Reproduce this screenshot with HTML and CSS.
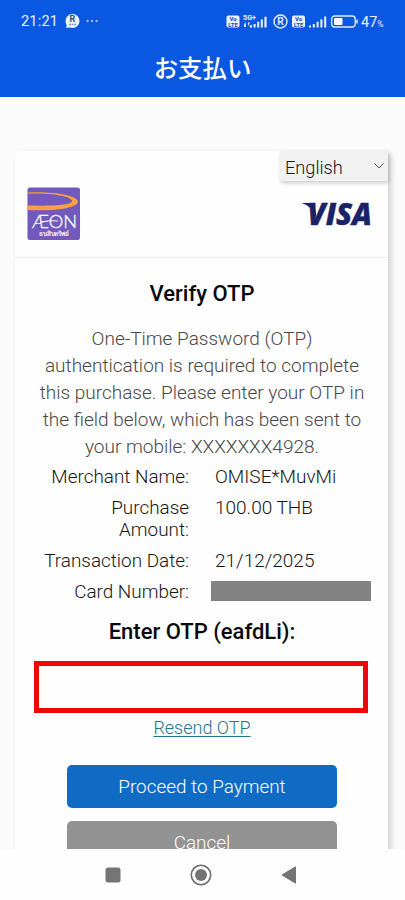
FILE: index.html
```html
<!DOCTYPE html>
<html lang="ja">
<head>
<meta charset="utf-8">
<meta name="viewport" content="width=device-width, initial-scale=1">
<title>お支払い</title>
<link rel="stylesheet" href="styles.css">
</head>
<body>
<div class="phone">
  <header class="appbar">
    <div class="status">
      <span class="clock">21:21</span>
      <svg class="notice" width="36" height="16" viewBox="0 0 36 16">
        <circle cx="7.5" cy="8" r="7" fill="#edf5ff"/>
        <text x="7.5" y="9" font-size="9" font-weight="700" text-anchor="middle" fill="#29527f">R</text>
        <path d="M4 11.500h7" stroke="#7d99ba" stroke-width="1.600" stroke-dasharray="2 .6"/>
        <path d="M1 15l1-4 4 3z" fill="#edf5ff"/>
        <circle cx="22.700" cy="8" r="1" fill="#dceaff"/><circle cx="27.100" cy="8" r="1" fill="#dceaff"/><circle cx="31.500" cy="8" r="1" fill="#dceaff"/>
      </svg>
      <svg class="signals" width="132" height="18" viewBox="0 0 132 18">
        <g fill="#e9f3ff">
          <rect x="0.500" y="3.500" width="13" height="12" rx="2"/>
          <rect x="66" y="3.500" width="13" height="12" rx="2"/>
          <text x="17" y="7.800" font-size="7" font-weight="700" textLength="13" lengthAdjust="spacingAndGlyphs">5G+</text>
          <path d="M18 12.500l1.800-2.500V15h-1.800zM22 10.500h1.800l-1.800 4z"/>
          <path d="M24 13h2v2.500h-2zM27.600 12h2v3.500h-2zM31.200 9.700h2v5.800h-2zM34.800 7.500h2v8h-2zM38.400 4.700h2.200v10.800h-2.200z"/>
          <path d="M83 13.500h2v2h-2zM86.800 12h2v3.500h-2zM90.600 9.800h2v5.700h-2zM94.400 7.300h2v8.200h-2zM98.200 4.500h2v11h-2z"/>
        </g>
        <g fill="#1755cb" font-size="6" font-weight="800" text-anchor="middle">
          <text x="7" y="9">Vo</text><text x="7" y="14.500">LTE</text>
          <text x="72.500" y="9">Vo</text><text x="72.500" y="14.500">LTE</text>
        </g>
        <circle cx="54.500" cy="9.500" r="6.500" fill="none" stroke="#e9f3ff" stroke-width="1.400"/>
        <text x="54.500" y="13.100" font-size="10" font-weight="600" fill="#e9f3ff" text-anchor="middle">R</text>
        <rect x="105.700" y="4" width="23.500" height="11" rx="3" fill="none" stroke="#e0edff" stroke-width="1.300"/>
        <rect x="108" y="6" width="8.500" height="7" rx="1" fill="#f3f9ff"/>
        <path d="M131 7.500v4" stroke="#e0edff" stroke-width="1.500"/>
      </svg>
      <span class="charge">47<small>%</small></span>
    </div>
    <h1>お支払い</h1>
  </header>

  <main class="viewport">
    <section class="card">
      <div class="brands">
        <svg class="aeon" width="54" height="54" viewBox="0 0 54 54">
          <rect x="0.500" y="0.500" width="52.500" height="52.500" rx="2.500" fill="#7259bd"/>
          <path d="M.5 5.500C25 4 50 8 51 14.500C51 20.500 30 24.500 .5 23V18.500C25 19 46 18.500 45 13.500C43 8.500 22 5.800 .5 6.500Z" fill="#f9a044"/>
          <text x="5" y="40.500" font-family="Lato, sans-serif" fill="#fff" stroke="#fff" stroke-width=".3" font-size="18" textLength="45" lengthAdjust="spacingAndGlyphs">ÆON</text>
          <path d="M13 36C18 33.500 24 33.500 31 34" fill="none" stroke="#fff"/>
          <text x="12" y="49" font-size="6.500" fill="#f7f0ff" stroke="#f7f0ff" stroke-width=".2" textLength="30" lengthAdjust="spacingAndGlyphs">ธนสินทรัพย์</text>
        </svg>
        <svg class="visa" width="70" height="26" viewBox="0 0 70 26">
          <path d="M-.5 2H8.500Q11.500 2 12.500 5L15 19Q11 5 -.5 2Z" fill="#1a2367"/>
          <text x="5.500" y="23.500" font-family="Open Sans, sans-serif" font-size="30" font-weight="800" font-style="italic" fill="#1a2367" stroke="#1a2367" stroke-width=".4" textLength="64.500" lengthAdjust="spacingAndGlyphs">VISA</text>
        </svg>
        <div class="language">English
          <svg width="12" height="8" viewBox="0 0 12 8"><path d="M1.500 1.500L6 6l4.500-4.500" fill="none" stroke="#555" stroke-width="1"/></svg>
        </div>
      </div>
      <h2>Verify OTP</h2>
      <p class="message">One-Time Password (OTP)<br>authentication is required to complete<br>this purchase. Please enter your OTP in<br>the field below, which has been sent to<br>your mobile: XXXXXXX4928.</p>
      <dl class="details">
        <dt>Merchant Name:</dt><dd>OMISE*MuvMi</dd>
        <dt>Purchase<br>Amount:</dt><dd>100.00 THB</dd>
        <dt>Transaction Date:</dt><dd>21/12/2025</dd>
        <dt>Card Number:</dt><dd class="redacted"></dd>
      </dl>
      <h2 class="enter">Enter OTP (eafdLi):</h2>
      <input class="otp" aria-label="OTP">
      <a class="resend" href="#">Resend OTP</a>
      <button class="button proceed">Proceed to Payment</button>
      <button class="button cancel">Cancel</button>
    </section>
  </main>

  <nav class="navbar">
    <svg width="16" height="16" viewBox="0 0 16 16"><rect x="0.500" y="0.500" width="15" height="15" rx="2.500" fill="#757575"/></svg>
    <svg width="22" height="22" viewBox="0 0 22 22"><circle cx="11" cy="11" r="9.700" fill="none" stroke="#6b6b6b" stroke-width="1.600"/><circle cx="11" cy="11" r="6" fill="#737373"/></svg>
    <svg width="16" height="18" viewBox="0 0 16 18"><path d="M1 9L14.500 .8V17.200Z" fill="#757575" stroke="#757575" stroke-linejoin="round"/></svg>
  </nav>
</div>
</body>
</html>
```
FILE: styles.css
```css
* { box-sizing: border-box; }
body { margin: 0; font-family: Roboto, "Noto Sans CJK JP", sans-serif; }
.phone { width: 405px; height: 900px; display: flex; flex-direction: column; overflow: hidden; background: #fefefe; }
.appbar { flex: 0 0 97px; background: #0a57e2; color: #fff; }
.status { height: 42px; padding: 12px 0 0 21px; display: flex; align-items: flex-start; color: #e9f3ff; }
.clock { width: 44px; font-size: 14.5px; line-height: 20px; letter-spacing: .2px; }
.notice { margin-top: 1px; }
.signals { margin-left: 125px; }
.charge { margin-left: 3px; font-size: 14.5px; line-height: 21px; white-space: nowrap; }
.charge small { font-size: 8.5px; }
h1 { margin: 7px 0 0; text-align: center; font: 500 24.4px/36px "Noto Sans CJK JP", sans-serif; }
.viewport { height: 752px; padding: 54px 17px 0 15px; overflow: hidden; background: #fbfbfb; }
.card { height: 850px; display: flex; flex-direction: column; align-items: center; background: #fefefe; border-radius: 7px 0 0; box-shadow: 3px 3px 6px rgba(0,0,0,.17); font-weight: 300; font-size: 19px; color: #151515; }
.brands { position: relative; width: 100%; height: 106.5px; flex: none; padding: 36px 16px 0 12px; display: flex; justify-content: space-between; border-bottom: 1.5px solid #ececec; }
.visa { margin-top: 14px; overflow: visible; }
.language { position: absolute; right: 0; top: 0; width: 108px; height: 30px; padding: 3px 3px 0 5px; display: flex; justify-content: space-between; align-items: center; background: #f1f1f1; box-shadow: 1px 2px 4px rgba(0,0,0,.2); font-size: 18.2px; line-height: 30px; font-weight: 300; }
.language svg { margin-bottom: 3px; }
h2 { margin: 21.5px 0 0 1px; font-size: 22px; line-height: 30px; font-weight: 500; color: #080808; }
.message { margin: 16px 0 0 1px; text-align: center; line-height: 27px; color: #484848; white-space: nowrap; }
.details { width: 100%; margin: 6px 0 0; display: grid; grid-template-columns: 174px 160px; column-gap: 26px; row-gap: 8.5px; line-height: 22.4px; }
.details dt { text-align: right; font-size: 18.9px; }
.details dd { margin: 0; }
.details .redacted { height: 20px; width: 160px; margin: 0 0 0 -4px; background: #828282; }
h2.enter { margin-top: 13.7px; }
.otp { flex: none; width: 334px; height: 52px; margin: 14px 0 0 -2px; padding: 0 14px; border: 5px solid #ed0808; background: #fefefe; }
.resend { margin: 3px 0 0 1px; font-size: 18px; line-height: 24px; color: #23758f; text-decoration-thickness: 1px; text-underline-offset: 2px; }
.button { flex: none; width: 270px; height: 43px; padding: 0 0 0 1px; border: 0; border-radius: 5px; font: 300 18.9px/43px Roboto, sans-serif; color: #fff; }
.proceed { margin-top: 24.5px; background: #106bc4; }
.cancel { margin-top: 13px; background: #929292; }
.navbar { flex: 1; padding: 0 108px 0 105px; display: flex; align-items: center; justify-content: space-between; background: #fefefe; }
```
